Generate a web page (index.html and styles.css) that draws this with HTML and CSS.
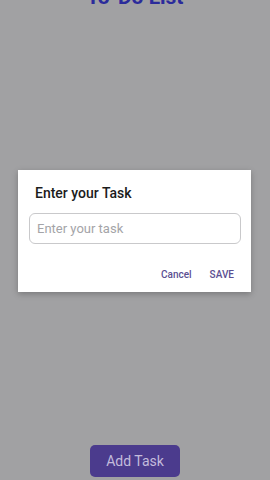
FILE: index.html
```html
<!DOCTYPE html>
<html lang="en">
<head>
    <meta charset="UTF-8">
    <meta name="viewport" content="width=device-width, initial-scale=1.0">
    <title>To-Do List</title>
    <link rel="stylesheet" href="styles.css">
</head>
<body>
    <div class="screen">
        <div class="title">To-Do List</div>

        <!-- task dialog -->
        <div class="dialog">
            <div class="dialog-title">Enter your Task</div>
            <div class="input-field">
                <input type="text" placeholder="Enter your task">
            </div>
            <div class="actions">
                <button class="btn-text">Cancel</button>
                <button class="btn-text">SAVE</button>
            </div>
        </div>

        <div class="footer">
            <button class="add-btn">Add Task</button>
        </div>
    </div>
</body>
</html>
```

FILE: styles.css
```css
body {
    font-family: Roboto, "Noto Sans", Arial, sans-serif;
    background-color: #a1a1a3;
    margin: 0;
    padding: 0;
    overflow: hidden;
}
.screen {
    height: 480px;
    display: flex;
    flex-direction: column;
}
.title {
    font-size: 21px;
    font-weight: bold;
    color: #2b2b9b;
    text-align: center;
    line-height: 24px;
    margin-top: -15px;
}
.dialog {
    margin: 161px 19px 0 18px;
    background-color: #fff;
    box-shadow: 0 2px 6px rgba(0, 0, 0, 0.25);
    padding: 14px 0 0 0;
    height: 108px;
}
.dialog-title {
    font-size: 14px;
    font-weight: 500;
    color: #1c1c1c;
    padding-left: 17px;
    line-height: 18px;
}
.input-field {
    margin: 11px 10px 0 11px;
}
.input-field input {
    box-sizing: border-box;
    width: 100%;
    height: 31px;
    border: 1px solid #c9c9cb;
    border-radius: 6px;
    padding: 0 7px;
    font-family: Roboto, Arial, sans-serif;
    font-size: 13px;
    color: #333;
    outline: none;
}
.input-field input::placeholder {
    color: #a4a4a8;
}
.actions {
    display: flex;
    justify-content: flex-end;
    gap: 18px;
    padding-right: 17px;
    margin-top: 25px;
}
.btn-text {
    background: none;
    border: none;
    padding: 0;
    font-family: Roboto, Arial, sans-serif;
    font-size: 10px;
    font-weight: 500;
    color: #5c4f92;
    cursor: pointer;
}
.footer {
    margin-top: auto;
    margin-bottom: 3px;
    display: flex;
    justify-content: center;
}
.add-btn {
    width: 90px;
    height: 32px;
    background-color: #4b3b8d;
    color: #c3bcdc;
    border: none;
    border-radius: 5px;
    font-family: Roboto, Arial, sans-serif;
    font-size: 14px;
    cursor: pointer;
}
```
